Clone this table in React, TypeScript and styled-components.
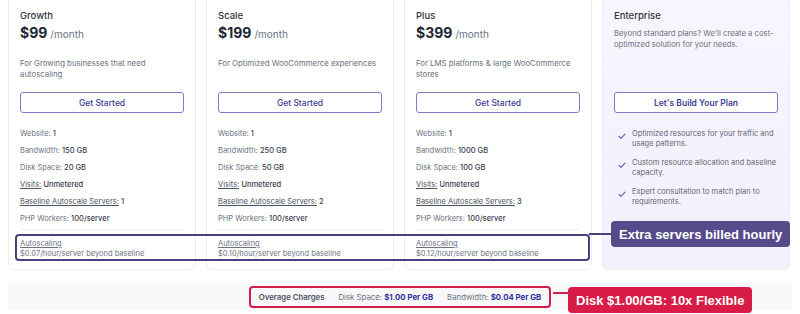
import React from "react";
import styled, {createGlobalStyle} from "styled-components";

const GlobalStyle = createGlobalStyle`
  html, body {
    margin: 0;
    padding: 0;
    background: #ffffff;
  }
  body {
    font-family: "Inter", "Noto Sans", sans-serif;
    color: #374151;
  }
`;

type Feature = {label: string; value: string; underline?: boolean};

type Plan = {
  name: string;
  price: string;
  description: string;
  features: Feature[];
  overage: string;
};

const plans: Plan[] = [
  {
    name: "Growth",
    price: "$99",
    description: "For Growing businesses that need autoscaling",
    features: [
      {label: "Website:", value: "1"},
      {label: "Bandwidth:", value: "150 GB"},
      {label: "Disk Space:", value: "20 GB"},
      {label: "Visits:", value: "Unmetered", underline: true},
      {label: "Baseline Autoscale Servers:", value: "1", underline: true},
      {label: "PHP Workers:", value: "100/server"},
    ],
    overage: "$0.07/hour/server beyond baseline",
  },
  {
    name: "Scale",
    price: "$199",
    description: "For Optimized WooCommerce experiences",
    features: [
      {label: "Website:", value: "1"},
      {label: "Bandwidth:", value: "250 GB"},
      {label: "Disk Space:", value: "50 GB"},
      {label: "Visits:", value: "Unmetered", underline: true},
      {label: "Baseline Autoscale Servers:", value: "2", underline: true},
      {label: "PHP Workers:", value: "100/server"},
    ],
    overage: "$0.10/hour/server beyond baseline",
  },
  {
    name: "Plus",
    price: "$399",
    description: "For LMS platforms & large WooCommerce stores",
    features: [
      {label: "Website:", value: "1"},
      {label: "Bandwidth:", value: "1000 GB"},
      {label: "Disk Space:", value: "100 GB"},
      {label: "Visits:", value: "Unmetered", underline: true},
      {label: "Baseline Autoscale Servers:", value: "3", underline: true},
      {label: "PHP Workers:", value: "100/server"},
    ],
    overage: "$0.12/hour/server beyond baseline",
  },
];

const enterprisePoints = [
  "Optimized resources for your traffic and usage patterns.",
  "Custom resource allocation and baseline capacity.",
  "Expert consultation to match plan to requirements.",
];

const Check = () => (
  <svg width="8" height="8" viewBox="0 0 8 8" fill="none">
    <path d="M1 4.4 L3 6.4 L7 2.2" stroke="#5b5bb0" strokeWidth="1.1" strokeLinecap="round" strokeLinejoin="round"/>
  </svg>
);

export default function App() {
  return (
    <Page>
      <GlobalStyle/>
      <Plans>
        {plans.map((plan) => (
          <PlanCard key={plan.name}>
            <PlanName>{plan.name}</PlanName>
            <Price>
              {plan.price}
              <span>/month</span>
            </Price>
            <Description>{plan.description}</Description>
            <CtaButton>Get Started</CtaButton>
            <FeatureList>
              {plan.features.map((f) => (
                <FeatureItem key={f.label}>
                  <FeatureLabel $underline={f.underline}>{f.label}</FeatureLabel> <b>{f.value}</b>
                </FeatureItem>
              ))}
            </FeatureList>
            <Autoscale>
              <AutoscaleTitle>Autoscaling</AutoscaleTitle>
              <AutoscaleRate>{plan.overage}</AutoscaleRate>
            </Autoscale>
          </PlanCard>
        ))}

        <PlanCard $tinted>
          <PlanName>Enterprise</PlanName>
          <EnterpriseText>
            Beyond standard plans? We'll create a cost-optimized solution for your needs.
          </EnterpriseText>
          <CtaButton $strong>Let's Build Your Plan</CtaButton>
          <PointList>
            {enterprisePoints.map((p) => (
              <Point key={p}>
                <Check/>
                <span>{p}</span>
              </Point>
            ))}
          </PointList>
        </PlanCard>
      </Plans>

      <OverageBand>
        <OverageBox>
          <OverageTitle>Overage Charges</OverageTitle>
          <OverageItem>Disk Space: <b>$1.00 Per GB</b></OverageItem>
          <OverageItem>Bandwidth: <b>$0.04 Per GB</b></OverageItem>
        </OverageBox>
      </OverageBand>

      {/* callouts over the screenshot */}
      <Highlight/>
      <Connector $color="#4b3f7d" style={{left: 589, top: 233, width: 23}}/>
      <Callout $bg="#574a8b" style={{left: 611, top: 221}}>Extra servers billed hourly</Callout>
      <Connector $color="#d21f4a" style={{left: 553, top: 292, width: 16}}/>
      <Callout $bg="#d81b47" style={{left: 568, top: 287}}>Disk $1.00/GB: 10x Flexible</Callout>
    </Page>
  );
}

const Page = styled.div`
  position: relative;
  width: 800px;
  height: 314px;
  overflow: hidden;
`;

const Plans = styled.div`
  display: grid;
  grid-template-columns: repeat(4, 188px);
  gap: 10px;
  padding: 0 8px;
  margin-top: -6px;
`;

const PlanCard = styled.div<{ $tinted?: boolean }>`
  box-sizing: border-box;
  display: flex;
  flex-direction: column;
  padding: 14px 11px 10px;
  border: 1px solid #ececf1;
  border-radius: 6px;
  background: ${(p) => (p.$tinted ? "linear-gradient(180deg, #f7f5fd 0%, #f3f0fc 100%)" : "#ffffff")};
`;

const PlanName = styled.div`
  font-size: 9.5px;
  line-height: 14px;
  font-weight: 500;
  color: #2f3441;
`;

const Price = styled.div`
  font-size: 14px;
  line-height: 20px;
  font-weight: 700;
  color: #222836;

  span {
    margin-left: 3px;
    font-size: 10px;
    font-weight: 400;
    color: #6b7280;
  }
`;

const Description = styled.div`
  margin-top: 14px;
  height: 22px;
  font-size: 7.8px;
  line-height: 11px;
  color: #6b7280;
`;

const EnterpriseText = styled.div`
  margin-top: 5px;
  height: 52px;
  font-size: 7.7px;
  line-height: 11px;
  color: #6b7280;
`;

const CtaButton = styled.button<{ $strong?: boolean }>`
  box-sizing: border-box;
  margin-top: 12px;
  height: 21px;
  width: 100%;
  border: 1px solid #7c7cc6;
  border-radius: 3px;
  background: #ffffff;
  font-family: inherit;
  font-size: 8.5px;
  font-weight: ${(p) => (p.$strong ? 600 : 500)};
  color: #3d3d93;
`;

const FeatureList = styled.div`
  margin-top: 12px;
  display: flex;
  flex-direction: column;
  padding-bottom: 2px;
  border-bottom: 1px solid #eeeef2;
`;

const FeatureItem = styled.div`
  font-size: 7.5px;
  line-height: 17px;
  color: #6b7280;

  b {
    font-weight: 500;
    color: #3b4150;
  }
`;

const FeatureLabel = styled.span<{ $underline?: boolean }>`
  text-decoration: ${(p) => (p.$underline ? "underline" : "none")};
  color: ${(p) => (p.$underline ? "#4b5262" : "#6b7280")};
`;

const Autoscale = styled.div`
  padding-top: 9px;
  font-size: 7.5px;
  line-height: 10px;
  color: #6b7280;
`;

const AutoscaleTitle = styled.div`
  text-decoration: underline;
`;

const AutoscaleRate = styled.div``;

const PointList = styled.div`
  margin-top: 16px;
  display: flex;
  flex-direction: column;
  gap: 9px;
`;

const Point = styled.div`
  display: flex;
  gap: 6px;
  padding-left: 4px;
  font-size: 7.5px;
  line-height: 10px;
  color: #5f6675;

  svg {
    flex: none;
    margin-top: 3px;
  }
`;

const OverageBand = styled.div`
  margin: 13px 8px 0;
  height: 27px;
  display: flex;
  justify-content: center;
  align-items: center;
  background: #f8f8fa;
`;

const OverageBox = styled.div`
  box-sizing: border-box;
  height: 22px;
  display: flex;
  align-items: center;
  gap: 14px;
  padding: 0 8px;
  border: 2px solid #d21f4a;
  border-radius: 4px;
  font-size: 7.8px;
  color: #6b7280;

  b {
    font-weight: 700;
    color: #2c2f9c;
  }
`;

const OverageTitle = styled.span`
  font-weight: 600;
  color: #4b5262;
`;

const OverageItem = styled.span``;

const Highlight = styled.div`
  position: absolute;
  left: 15px;
  top: 234px;
  width: 575px;
  height: 27px;
  box-sizing: border-box;
  border: 2px solid #4b3f7d;
  border-radius: 4px;
`;

const Connector = styled.div<{ $color: string }>`
  position: absolute;
  height: 1.5px;
  background: ${(p) => p.$color};
`;

const Callout = styled.div<{ $bg: string }>`
  position: absolute;
  height: 26px;
  padding: 0 8px;
  display: flex;
  align-items: center;
  border-radius: 4px;
  background: ${(p) => p.$bg};
  color: #ffffff;
  font-family: "Liberation Sans", Arial, sans-serif;
  font-size: 13px;
  font-weight: 700;
  white-space: nowrap;
`;
